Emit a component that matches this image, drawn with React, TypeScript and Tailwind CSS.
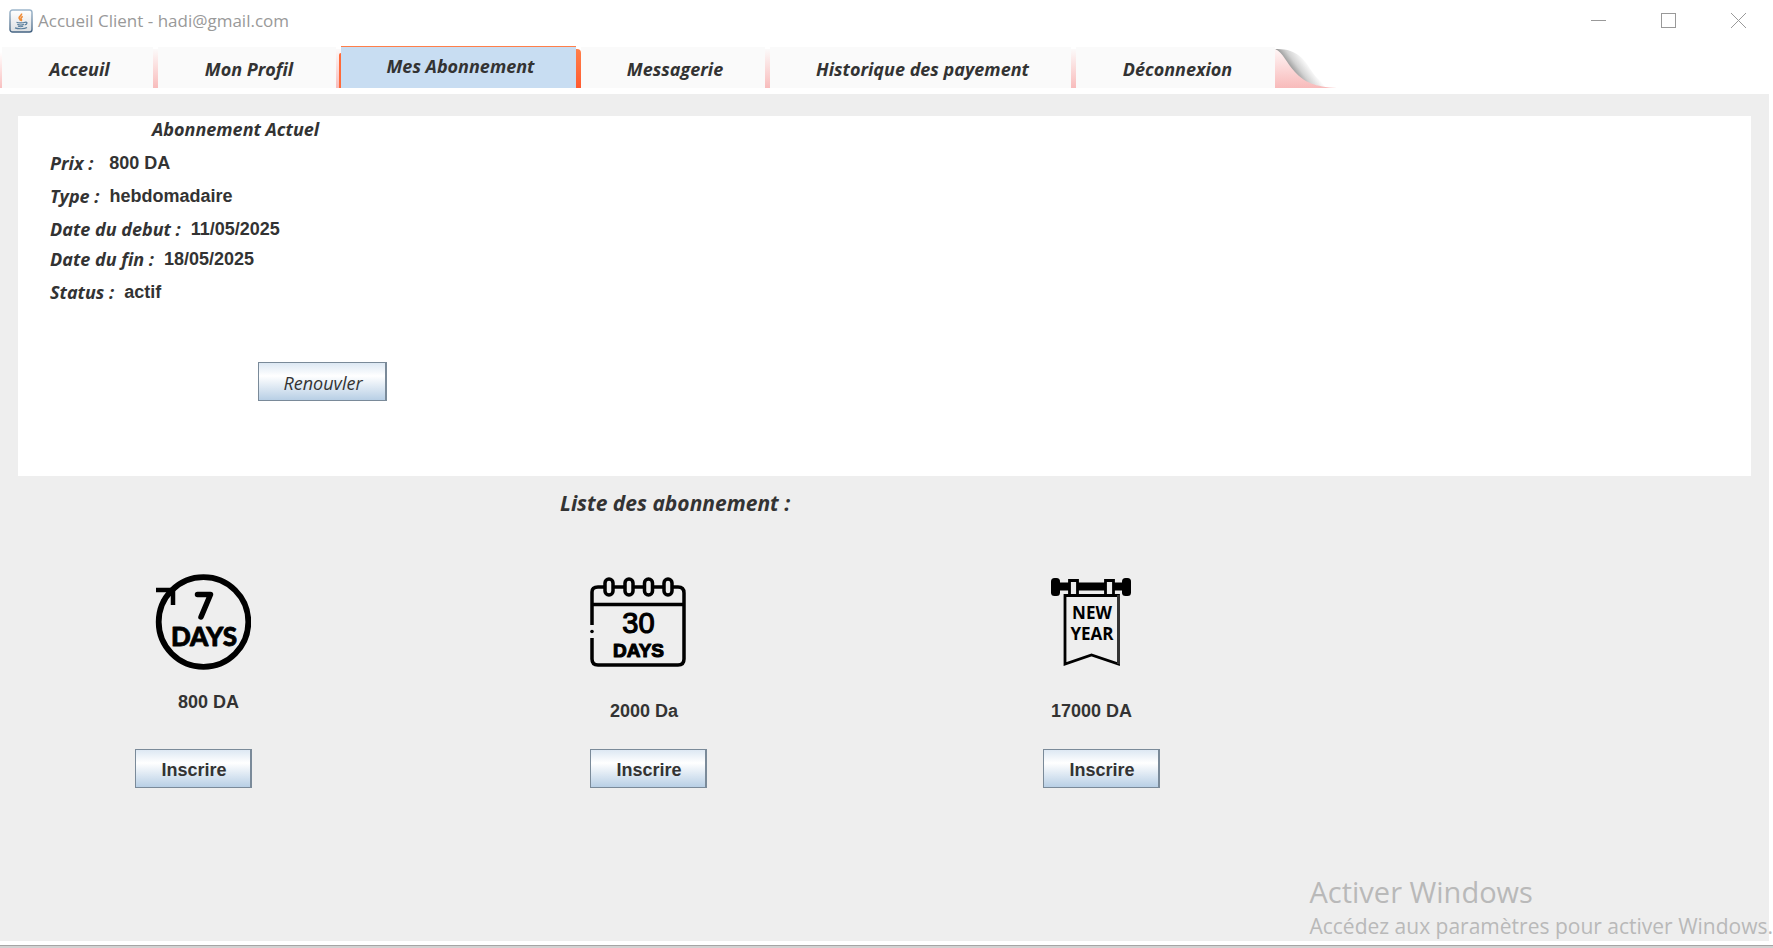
import type { ReactNode } from "react";

const humanist = "font-['Open_Sans','Noto_Sans',sans-serif]";
const arial = "font-['Liberation_Sans',Arial,sans-serif]";

const tabs = [
  { label: "Acceuil", width: "w-[151px]" },
  { label: "Mon Profil", width: "w-[178px]" },
  { label: "Mes Abonnement", width: "w-[235px]", active: true },
  { label: "Messagerie", width: "w-[184px]" },
  { label: "Historique des payement", width: "w-[301px]" },
  { label: "Déconnexion", width: "w-[199px]" },
];

const details = [
  { label: "Prix :", value: "800 DA", gap: "gap-4", height: "h-[33px]" },
  { label: "Type :", value: "hebdomadaire", gap: "gap-2.5", height: "h-[33px]" },
  { label: "Date du debut :", value: "11/05/2025", gap: "gap-2.5", height: "h-[33px]" },
  { label: "Date du fin :", value: "18/05/2025", gap: "gap-2.5", height: "h-[30px]" },
  { label: "Status :", value: "actif", gap: "gap-2.5", height: "h-[33px]" },
];

function JavaIcon() {
  return (
    <svg width="25" height="24" viewBox="0 0 25 24" aria-hidden="true">
      <defs>
        <linearGradient id="javaBg" x1="0" y1="0" x2="0" y2="1">
          <stop offset="0" stopColor="#ffffff" />
          <stop offset="1" stopColor="#dcdfe2" />
        </linearGradient>
        <linearGradient id="javaEdge" x1="0" y1="0" x2="0" y2="1">
          <stop offset="0" stopColor="#9db6cb" />
          <stop offset="1" stopColor="#446382" />
        </linearGradient>
      </defs>
      <rect x="1" y="1" width="22" height="22" rx="2.5" fill="url(#javaBg)" stroke="url(#javaEdge)" strokeWidth="1.4" />
      <path d="M12.500 4.500c1 2-3.300 2.700-2.400 4.800.4.900 1.400 1.400 1.200 2.500M13.800 7.500c-1.800.8-2.300 1.700-1.500 2.800.5.700.2 1.200-.4 1.600" fill="none" stroke="#ef8a33" strokeWidth="1.500" />
      <path d="M7.500 13.300c2 .8 6.500.7 8.500-.1M8.300 15.400c2 .8 5 .8 6.600 0M9 17.300c1.500.5 3.700.5 5.200 0M16 13.300c2.800-.6 2.500 2.100-.3 2.500M6 18.900c2.800 1.200 9.500 1.200 12-.3" fill="none" stroke="#5b7f9d" strokeWidth="1.200" />
    </svg>
  );
}

function TitleBar() {
  return (
    <header className="flex h-[46px] items-start justify-between pl-[9px] pr-[27px] pt-2">
      <div className="flex items-center gap-1">
        <JavaIcon />
        <h1 className={`${humanist} text-[17px] leading-[26px] text-[#999999]`}>Accueil Client - hadi@gmail.com</h1>
      </div>
      <div className="flex items-center gap-[55px] pt-[5px] text-[#999999]">
        <button type="button" aria-label="Réduire">
          <svg width="15" height="15" viewBox="0 0 15 15"><path d="M0 7.500h15" stroke="currentColor" /></svg>
        </button>
        <button type="button" aria-label="Agrandir">
          <svg width="15" height="15" viewBox="0 0 15 15"><rect x=".5" y=".5" width="14" height="14" fill="none" stroke="currentColor" /></svg>
        </button>
        <button type="button" aria-label="Fermer">
          <svg width="15" height="15" viewBox="0 0 15 15"><path d="M0 0l15 15M15 0L0 15" stroke="currentColor" /></svg>
        </button>
      </div>
    </header>
  );
}

function TabBar() {
  return (
    <nav className="flex h-12 items-end pb-[6px]">
      <span className="h-9 w-[2px] bg-linear-to-b from-white to-[#f8c0c0]" />
      {tabs.map((tab, i) => (
        <div key={tab.label} className="flex items-end">
          <button
            type="button"
            className={`${tab.width} ${humanist} pl-1 text-[18px] font-bold italic text-[#333333] ${
              tab.active ? "h-[42px] border-t border-[#ff7f4a] bg-[#c8ddf2] pb-[2px]" : "h-[41px] bg-[#fafafa] pt-1"
            }`}
          >
            {tab.label}
          </button>
          {tab.active ? (
            <span className="h-[39px] w-[5px] rounded-tr-[4px] bg-linear-to-b from-[#ff7f4a] to-[#ff5a30]" />
          ) : i < tabs.length - 1 ? (
            <span className="flex h-[39px] w-[5px] bg-linear-to-b from-[#fbfafa] to-[#f8bcbc]">
              {tabs[i + 1].active && <span className="ml-auto mt-1 w-[2px] rounded-tl-sm bg-[#ff6a3a]" />}
            </span>
          ) : (
            <TabTail />
          )}
        </div>
      ))}
    </nav>
  );
}

function TabTail() {
  return (
    <svg width="64" height="40" viewBox="0 0 64 40" aria-hidden="true">
      <defs>
        <linearGradient id="tailFill" x1="0" y1="0" x2="0" y2="1">
          <stop offset="0" stopColor="#fff6f6" />
          <stop offset="1" stopColor="#f8baba" />
        </linearGradient>
        <linearGradient id="tailShade" gradientUnits="userSpaceOnUse" x1="15" y1="22" x2="30" y2="11">
          <stop offset="0" stopColor="#8c8c8c" />
          <stop offset=".45" stopColor="#d2d2d2" />
          <stop offset="1" stopColor="#ffffff" />
        </linearGradient>
      </defs>
      <path d="M0 1C22 0 30 12 36 22C42 32 50 38 62 40C38 40 25 33 17 23Z" fill="url(#tailShade)" />
      <path d="M0 1C8 4 12 16 20 24C29 34 40 39 62 40H0Z" fill="url(#tailFill)" />
    </svg>
  );
}

function SwingButton({ children, className }: { children: ReactNode; className: string }) {
  return (
    <button
      type="button"
      className={`h-[39px] border border-r-2 border-[#7a8a99] bg-linear-to-b from-[#dde8f3] via-white via-35% to-[#b8cfe5] pl-[2px] pt-1 text-[18px] text-[#333333] ${className}`}
    >
      {children}
    </button>
  );
}

function SevenDaysIcon() {
  return (
    <svg width="96" height="96" viewBox="0 0 96 96" role="img" aria-label="7 days">
      <circle cx="48.500" cy="48" r="44.800" fill="none" stroke="#000" strokeWidth="5.800" />
      <path d="M1 16h17v15" fill="none" stroke="#000" strokeWidth="4.500" />
      <path d="M8 27l10-11" stroke="#000" strokeWidth="4" />
      <path d="M42.500 20.500h13L46 43" fill="none" stroke="#000" strokeWidth="5.500" strokeLinecap="round" strokeLinejoin="round" />
      <text x="49" y="72" fontSize="26" textAnchor="middle" fontWeight="900" stroke="#000" strokeWidth=".8" strokeLinejoin="round" className="font-['Lato',sans-serif]">
        DAYS
      </text>
    </svg>
  );
}

function ThirtyDaysIcon() {
  return (
    <svg width="96" height="90" viewBox="0 0 96 90" role="img" aria-label="30 days">
      <g fill="none" stroke="#000" strokeWidth="3.500">
        <path d="M2 48V15Q2 10 8 10H88Q94 10 94 16V82Q94 88 88 88H8Q2 88 2 82V61M2 27.500H94" />
        {[19, 39, 58.5, 78].map((x) => (
          <rect key={x} x={x - 4} y="2" width="8" height="16" rx="4" fill="#eeeeee" />
        ))}
      </g>
      <circle cx="2" cy="54.500" r="1.800" />
      <g textAnchor="middle" stroke="#000" strokeLinejoin="round" className="font-['Liberation_Sans',Arial,sans-serif]">
        <text x="48.500" y="56" fontSize="29" strokeWidth="1.200">30</text>
        <text x="48.500" y="80" fontSize="19" fontWeight="700" strokeWidth="1.100">DAYS</text>
      </g>
    </svg>
  );
}

function NewYearIcon() {
  return (
    <svg width="80" height="90" viewBox="0 0 80 90" role="img" aria-label="New year">
      <rect x="0" y="1" width="9" height="18" rx="3.500" />
      <rect x="71" y="1" width="9" height="18" rx="3.500" />
      <path d="M8 5.500h64v8H8z" />
      <g fill="#eeeeee" stroke="#000" strokeWidth="2.800">
        <path d="M18.500 3.500h8v15h-8zM54.500 3.500h8v15h-8z" />
        <path d="M14 18.500H67.500V87L40.500 78L14 87Z" />
      </g>
      <path d="M67.500 18v69" stroke="#333" strokeWidth="3" />
      <g textAnchor="middle" className="font-['Open_Sans',sans-serif]" fontWeight="700" fontSize="17">
        <text x="41" y="42">NEW</text>
        <text x="41" y="63">YEAR</text>
      </g>
    </svg>
  );
}

const plans = [
  { price: "800 DA", icon: <SevenDaysIcon />, iconPad: "pl-5", pricePad: "pl-[43px]", drop: "pt-0", priceDrop: "pt-5" },
  { price: "2000 Da", icon: <ThirtyDaysIcon />, iconPad: "pl-0", pricePad: "pl-5", drop: "pt-[3px]", priceDrop: "pt-8" },
  { price: "17000 DA", icon: <NewYearIcon />, iconPad: "pl-2", pricePad: "pl-2", drop: "pt-[3px]", priceDrop: "pt-8" },
];

export default function App() {
  return (
    <div className="relative min-h-screen overflow-hidden bg-white">
      <TitleBar />
      <TabBar />
      <main className="mr-1 min-h-[847px] bg-[#eeeeee] pt-[22px]">
        <section className="ml-[18px] mr-[18px] h-[360px] bg-white pl-8">
          <h2 className={`${humanist} pl-[102px] text-[18px] font-bold italic leading-[26px] text-[#333333]`}>Abonnement Actuel</h2>
          <dl>
            {details.map((d) => (
              <div key={d.label} className={`flex items-end text-[18px] font-bold leading-6 text-[#333333] ${d.height} ${d.gap}`}>
                <dt className={`${humanist} italic`}>{d.label}</dt>
                <dd className={arial}>{d.value}</dd>
              </div>
            ))}
          </dl>
          <div className="pl-[208px] pt-[58px]">
            <SwingButton className={`${humanist} w-[129px] italic`}>Renouvler</SwingButton>
          </div>
        </section>
        <h2 className={`${humanist} pl-[560px] pt-3 text-[21px] font-bold italic leading-[30px] text-[#333333]`}>Liste des abonnement :</h2>
        <div className="grid grid-cols-[455fr_453fr_726fr] pl-[135px] pt-14">
          {plans.map((plan) => (
            <article key={plan.price} className="flex flex-col">
              <div className={`${plan.iconPad} ${plan.drop}`}>{plan.icon}</div>
              <p className={`${arial} ${plan.pricePad} ${plan.priceDrop} text-[18px] font-bold leading-6 text-[#333333]`}>{plan.price}</p>
              <div className="mt-auto pt-[26px]">
                <SwingButton className={`${arial} w-[117px] font-bold`}>Inscrire</SwingButton>
              </div>
            </article>
          ))}
        </div>
      </main>
      <footer className="mt-1 h-[3px] border-t border-[#a5a5a5] bg-[#d2d2d2]" />
      <aside className={`${humanist} pointer-events-none absolute bottom-[6px] right-0 whitespace-nowrap text-[#b9b9b9]`}>
        <p className="text-[29px] leading-9">Activer Windows</p>
        <p className="text-[21px] leading-8">Accédez aux paramètres pour activer Windows.</p>
      </aside>
    </div>
  );
}
